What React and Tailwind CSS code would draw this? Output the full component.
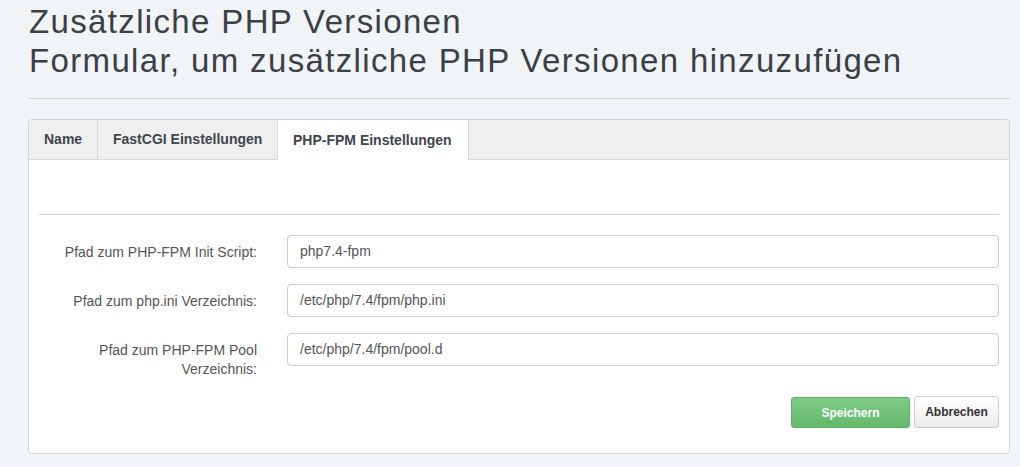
export default function App() {
  const rows = [
    { label: "Pfad zum PHP-FPM Init Script:", value: "php7.4-fpm" },
    { label: "Pfad zum php.ini Verzeichnis:", value: "/etc/php/7.4/fpm/php.ini" },
    { label: "Pfad zum PHP-FPM Pool Verzeichnis:", value: "/etc/php/7.4/fpm/pool.d" },
  ];
  return (
    <div
      className="w-[1020px] h-[467px] bg-[#f1f4f7] pl-[28px] pr-[10px] overflow-hidden"
      style={{ fontFamily: '"Liberation Sans", Arial, sans-serif' }}
    >
      <h1 className="pt-[2px] pl-[1px] text-[33px] leading-[39px] tracking-[1.35px] text-[#3a4047] font-normal whitespace-nowrap">
        Zusätzliche PHP Versionen
        <br />
        Formular, um zusätzliche PHP Versionen hinzuzufügen
      </h1>
      <div className="mt-[18px] border-t border-[#d2d5d8]" />
      <div className="mt-[20px] bg-white border border-[#d5d5d5] rounded-[4px] h-[335px]">
        <div className="flex h-[40px] bg-[#efeff0] border-b border-[#d9d9d9] rounded-t-[4px] text-[14px] font-bold text-[#3f454c]">
          <div className="flex items-center pl-[15px] pr-[15px] w-[69px] border-r border-[#d9d9d9]">Name</div>
          <div className="flex items-center pl-[15px] w-[180px] border-r border-[#d9d9d9]">FastCGI Einstellungen</div>
          <div className="flex items-center pl-[15px] w-[191px] h-[40px] bg-white border-r border-[#d9d9d9]">PHP-FPM Einstellungen</div>
        </div>
        <div className="px-[10px]">
          <div className="h-[55px] border-b border-[#d2d2d2]" />
          <div className="pt-[20px] flex flex-col gap-[16px]">
            {rows.map((r) => (
              <div key={r.label} className="flex">
                <div className="w-[248px] shrink-0 pl-[10px] pr-[30px] pt-[8px] text-right text-[14px] leading-[19px] text-[#555]">
                  {r.label}
                </div>
                <div className="flex-1 h-[33px] border border-[#cccccc] rounded-[4px] flex items-center pl-[12px] text-[14px] text-[#555]">
                  {r.value}
                </div>
              </div>
            ))}
          </div>
          <div className="flex justify-end gap-[4px] mt-[17px]">
            <button className="w-[119px] h-[31px] mt-[1px] rounded-[3px] border border-[#5eae66] bg-gradient-to-b from-[#7ecb86] to-[#63b96a] text-white text-[12px] font-bold">
              Speichern
            </button>
            <button className="w-[85px] h-[32px] rounded-[3px] border border-[#cfcfcf] bg-gradient-to-b from-white to-[#ececec] text-[#333] text-[12px] font-bold">
              Abbrechen
            </button>
          </div>
        </div>
      </div>
    </div>
  );
}
